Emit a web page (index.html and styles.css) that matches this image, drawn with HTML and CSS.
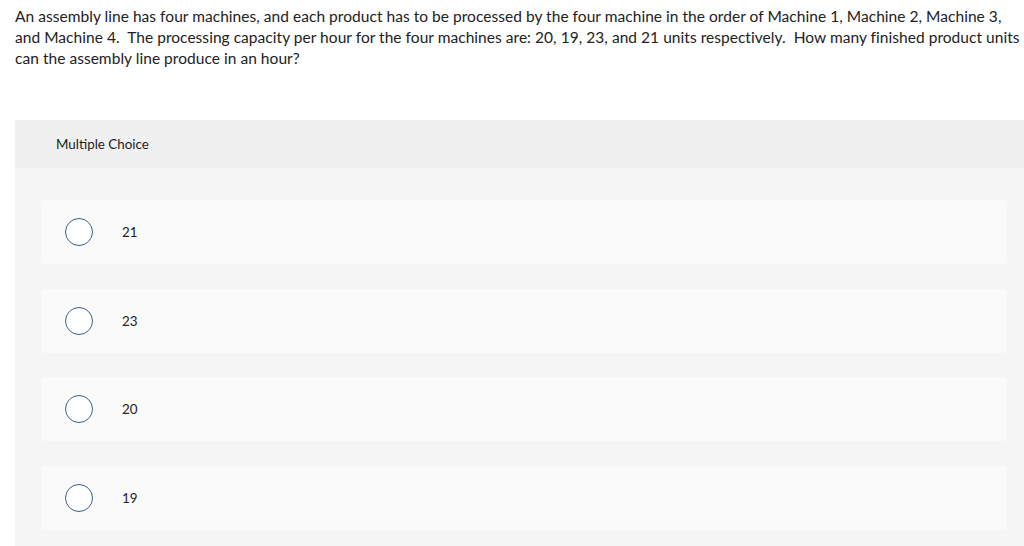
FILE: index.html
```html
<!DOCTYPE html>
<html>
<head>
<meta charset="utf-8">
<link rel="stylesheet" href="styles.css">
</head>
<body>
<p class="question">An assembly line has four machines, and each product has to be processed by the four machine in the order of Machine 1, Machine 2, Machine 3, and Machine 4.&nbsp; The processing capacity per hour for the four machines are: 20, 19, 23, and 21 units respectively.&nbsp; How many finished product units can the assembly line produce in an hour?</p>
<section class="panel">
  <div class="panel-head">Multiple Choice</div>
  <div class="panel-body">
    <label class="option"><span class="radio"></span><span class="label">21</span></label>
    <label class="option"><span class="radio"></span><span class="label">23</span></label>
    <label class="option"><span class="radio"></span><span class="label">20</span></label>
    <label class="option"><span class="radio"></span><span class="label">19</span></label>
  </div>
</section>
</body>
</html>
```
FILE: styles.css
```css
html, body {
  margin: 0;
  padding: 0;
  background: #ffffff;
}
body {
  font-family: "Lato", "Open Sans", sans-serif;
  color: #222222;
  overflow: hidden;
  height: 546px;
}
.question {
  margin: 0;
  padding: 6px 0 0 15px;
  font-size: 15.5px;
  letter-spacing: 0.04px;
  line-height: 21px;
  color: #222;
}
.panel {
  margin: 51px 0 0 15px;
  background: #f5f5f5;
  padding-bottom: 40px;
}
.panel-head {
  background: #f0f0f0;
  height: 48px;
  display: flex;
  align-items: center;
  padding-left: 41px;
  font-size: 13.4px;
  color: #222;
}
.panel-body {
  padding: 32px 17px 0 26px;
  display: flex;
  flex-direction: column;
  gap: 24.7px;
}
.option {
  background: #fafafa;
  border-radius: 3px;
  height: 64px;
  display: flex;
  align-items: center;
  padding-left: 24px;
}
.radio {
  width: 26px;
  height: 26px;
  border: 1px solid #3a5f8f;
  border-radius: 50%;
  background: #fff;
  flex: none;
}
.label {
  margin-left: 29px;
  font-size: 13.4px;
  color: #222;
}
```
